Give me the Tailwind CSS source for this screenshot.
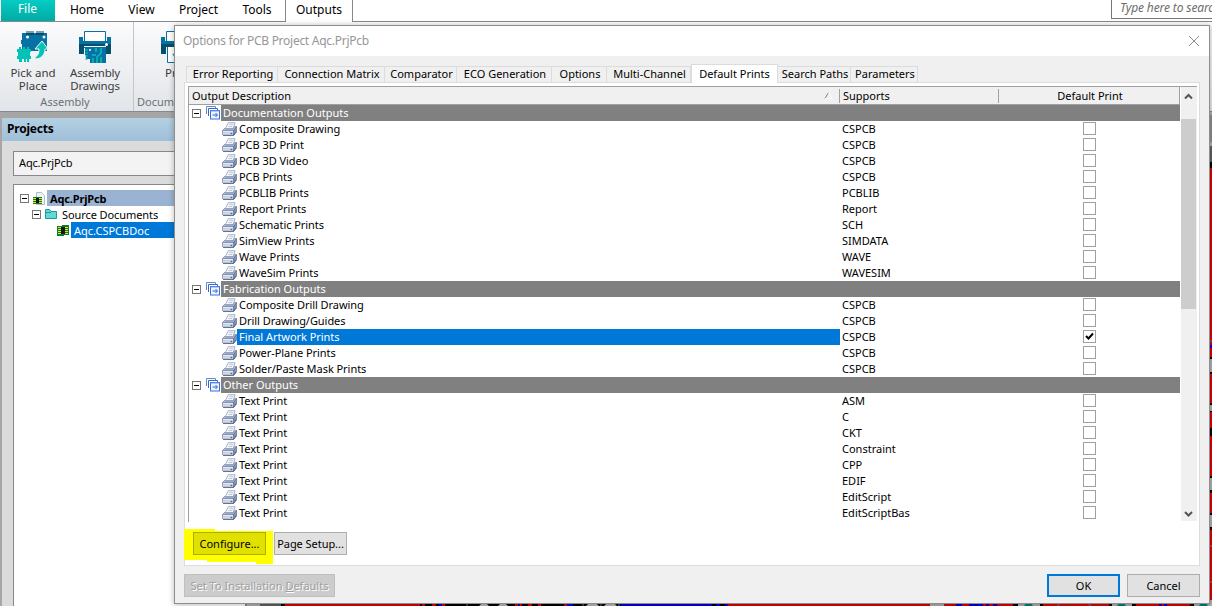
<!DOCTYPE html>
<html lang="en">
<head>
    <meta charset="UTF-8">
    <meta name="viewport" content="width=device-width, initial-scale=1.0">
    <title>Options for PCB Project</title>
    <script src="https://cdn.jsdelivr.net/npm/@tailwindcss/browser@4"></script>
</head>
<body class="relative w-[1212px] h-[606px] overflow-hidden bg-[#a6a6a6] font-['Noto_Sans','Open_Sans',sans-serif] text-[11px] leading-4 text-black whitespace-nowrap">

    <!-- Icons -->
    <svg class="hidden">
        <symbol id="printer" viewBox="0 0 16 16">
            <path d="M6.500 1.500h7l-2 6h-8z" fill="#f6f8fc" stroke="#8c9bbb" stroke-width=".8"/>
            <path d="M7.500 3.500h4M6.500 5.500h4" stroke="#a9b5cb" stroke-width=".8"/>
            <path d="M3 7L.8 9.500h11.400l2.800-4-1.700-.5-1.800 3H3.500z" fill="#b9c5dc" stroke="#6f80a4" stroke-width=".6"/>
            <path d="M.5 9.500h11.500v5H1.500l-1-1z" fill="#e6ebf4" stroke="#6b7ca0" stroke-width=".8"/>
            <path d="M12 9.500l3-4v5l-3 4z" fill="#7f91b6" stroke="#4b5f8a" stroke-width=".6"/>
            <path d="M1 12h11" stroke="#a3b0cb" stroke-width=".8"/>
            <path d="M1 14.500h11l3-3.500" stroke="#3d4f78" fill="none" stroke-width=".8"/>
            <path d="M9 12.500h1.500" stroke="#33425f"/>
        </symbol>
        <symbol id="stack" viewBox="0 0 15 14">
            <path d="M.5 8V.5h9V2" fill="none" stroke="#5b88dc"/>
            <path d="M2.500 10V2.500h9V4" fill="none" stroke="#3b66cc"/>
            <rect x="4.500" y="4.500" width="9" height="8.500" fill="#eef5ff" stroke="#3f6fd4"/>
            <path d="M4.500 5h9" stroke="#6fa3ee"/>
            <path d="M6.500 9h4.500M9.500 7l2 2-2 2" fill="none" stroke="#2560e0"/>
        </symbol>
        <symbol id="minus" viewBox="0 0 9 9">
            <rect x=".5" y=".5" width="8" height="8" fill="#fff" stroke="#777"/>
            <path d="M2 4.500h5" stroke="#000"/>
        </symbol>
        <symbol id="plotter" viewBox="0 0 32 32">
            <path d="M5.500 10V.5h21V10" fill="#fff" stroke="#0672a3"/>
            <path d="M0 6h4v4h24V6h4v8H0z" fill="#0672a3"/>
            <path d="M0 13h32v10h-5v-7H5v7H0z" fill="#074d6c"/>
        </symbol>
    </svg>

    <!-- Ribbon tabs -->
    <div class="flex h-[22px] items-stretch border-b border-[#85898f] bg-white text-[12px] leading-5">
        <div class="ml-px w-[54px] bg-linear-to-b from-[#05cdc5] to-[#02aaa3] pr-px text-center leading-[18px] text-white">File</div>
        <div class="w-[64px] text-center">Home</div>
        <div class="w-[45px] text-center">View</div>
        <div class="w-[69px] text-center">Project</div>
        <div class="w-[48px] text-center">Tools</div>
        <div class="ml-[4px] h-[22px] w-[68px] border-x border-[#85898f] bg-white text-center">Outputs</div>
        <div class="ml-auto h-[19px] w-[101px] overflow-hidden border-b border-l border-[#777] pl-[8px] leading-[15px] tracking-[-0.12px] text-[#6d6d6d] italic">Type here to search</div>
    </div>

    <!-- Ribbon -->
    <div class="flex h-[90px] border-b border-[#85898f] bg-linear-to-b from-[#fbfbfc] to-[#e2e5e9] text-[11.5px] leading-[13px] text-[#3c3c3c]">
        <div class="flex w-[134px] flex-col border-r border-[#c3c7cc]">
            <div class="flex h-[73px] pt-2 text-center">
                <div class="flex w-[66px] flex-col items-center">
                    <svg class="h-[34px] w-[32px]" viewBox="0 0 32 34">
                        <path d="M5 3h25v18H5V14h-1v-4h1z" fill="#0672a3"/>
                        <path d="M9 1v4h8V1M19 1v4h8V1" fill="#074d6c"/>
                        <path d="M10 1v2M12 1v2M14 1v2M16 1v2M20 1v2M22 1v2M24 1v2M26 1v2" stroke="#e9f1f5"/>
                        <circle cx="10.500" cy="7" r="1.500" fill="#fff"/>
                        <circle cx="27" cy="7" r="1.500" fill="#fff"/>
                        <path d="M0 19h2v-2h2v2h2v-2h2v2h2v-2h2v2h2v3h-1v4h1v3h-2v3h-2v-3H9v3H7v-3H5v3H2v-3H0v-3h1v-4H0z" fill="#04c2b8"/>
                        <path d="M25 11l6 8h-3c0 6-4 10-10 10v-2c3-1 4-4 4-8h-4z" fill="#04c2b8" stroke="#f5f6f7"/>
                    </svg>
                    <span class="mt-[2px]">Pick and<br>Place</span>
                </div>
                <div class="flex w-[58px] flex-col items-center">
                    <svg class="h-[34px] w-[32px]" viewBox="0 -1 32 34">
                        <use href="#plotter" width="32" height="32"/>
                        <circle cx="27.500" cy="13.500" r="1.500" fill="#fff"/>
                        <path d="M5 16h22v16H11v-4H7v-4H5z" fill="#0672a3"/>
                        <path d="M5 15.500h22M5.500 17v14" stroke="#f4f5f7"/>
                        <path d="M6 19h3M6 22h3M6 25h3M6 28h3" stroke="#04c2b8"/>
                        <path d="M14 32v-5M18 32v-6l4-4v-5M22 32v-6M17 21v-4M13 24h4" fill="none" stroke="#04c2b8" stroke-width="1.500"/>
                        <circle cx="11" cy="19" r="1" fill="#fff"/>
                    </svg>
                    <span class="mt-[2px] tracking-[-0.2px]">Assembly<br>Drawings</span>
                </div>
            </div>
            <div class="pr-[3px] text-center text-[#6c7076] text-[11px]">Assembly</div>
        </div>
        <div class="flex w-[90px] flex-col">
            <div class="h-[73px] pt-2 pl-[27px]">
                <svg class="h-[34px] w-[32px]" viewBox="0 -1 32 34">
                    <use href="#plotter" width="32" height="32"/>
                    <path d="M6.500 16v15.500h19V16" fill="#fff" stroke="#0672a3"/>
                    <path d="M12 23l4 4 6-8" fill="none" stroke="#04c2b8" stroke-width="2"/>
                </svg>
                <div class="mt-[2px] pl-[4px]">Print</div>
            </div>
            <div class="pl-[3px] text-[#6c7076] text-[11px]">Documentation</div>
        </div>
    </div>

    <!-- Projects panel -->
    <div class="mt-[6px] ml-[2px] h-[488px] w-[245px] border-r border-[#85898f] bg-[#dbdbdb]">
        <div class="h-[23px] bg-linear-to-b from-[#b4cfe2] to-[#9fc0d9] pl-[5px] text-[12px] leading-[22px] font-bold tracking-[-0.2px]">Projects</div>
        <div class="mt-[10px] ml-[11px] h-[25px] border border-[#85898f] bg-[#f3f3f3] pl-[5px] leading-[22px] tracking-[-0.15px]">Aqc.PrjPcb</div>
        <div class="mt-[8px] ml-[11px] h-[430px] border border-[#85898f] bg-white pt-[5px]">
            <div class="flex h-4 items-center">
                <svg class="ml-[6px] size-[9px]"><use href="#minus"/></svg>
                <svg class="ml-[4px] h-[13px] w-[12px]" viewBox="0 0 12 13">
                    <path d="M3.500.5h5l3 3v9h-8z" fill="#eff5f7" stroke="#a9bfc6"/>
                    <path d="M0 5h9v7H0z" fill="#087d2d"/><path d="M3 6h3v5H3z" fill="#111"/>
                    <path d="M0 6.500h3M0 8.500h3M0 10.500h3M6 6.500h3M6 8.500h3M6 10.500h3" stroke="#e9d934"/>
                </svg>
                <span class="ml-[2px] h-4 flex-1 bg-[#9ab3d2] pl-[3px] leading-[17px] font-bold tracking-[-0.15px]">Aqc.PrjPcb</span>
            </div>
            <div class="flex h-4 items-center">
                <svg class="ml-[18px] size-[9px]"><use href="#minus"/></svg>
                <svg class="ml-[4px] h-[10px] w-[12px]" viewBox="0 0 12 10">
                    <path d="M.5 9.500v-9h4l1.500 2h5.500v7z" fill="#62d9d5" stroke="#1b9c99"/><path d="M1 3.500h5" stroke="#1b9c99"/>
                </svg>
                <span class="mt-[2px] ml-[5px] leading-4 tracking-[-0.08px]">Source Documents</span>
            </div>
            <div class="flex h-4 items-center">
                <svg class="ml-[43px] h-[11px] w-[12px]" viewBox="0 0 12 11">
                    <path d="M0 1h5V0h7v10H7v1H0z" fill="#087d2d"/><path d="M4 2h4v7H4z" fill="#151515"/>
                    <path d="M1 2.500h3M1 4.500h3M1 6.500h3M1 8.500h3M8 2.500h3M8 4.500h3M8 6.500h3M8 8.500h3" stroke="#f0dd37"/>
                </svg>
                <span class="ml-[2px] h-4 flex-1 bg-[#0078d7] pl-[3px] leading-[17px] text-white">Aqc.CSPCBDoc</span>
            </div>
        </div>
    </div>

    <!-- Board canvas -->
    <svg class="absolute top-[112px] left-[247px] h-[494px] w-[965px]" viewBox="247 112 965 494">
        <path d="M247 112h965v494H247z" fill="#b0b0b0"/>
        <path d="M1209 115h3v27h-3z" fill="#8c8c8c"/>
        <path d="M260 146h952v460H260z" fill="#606060"/>
        <path d="M281 162h931v444H281z" fill="#000"/>
        <path d="M285 168h135v438H285zM728 600h285v6H728zM1043 600h66v6h-66zM1136 600h54v6h-54zM1208 168h4v189h-4zM1208 374h4v29h-4zM1208 412h4v16h-4zM1208 436h4v40h-4zM1208 493h4v20h-4zM1208 530h4v70h-4z" fill="#e00000"/>
        <path d="M422 600h3v6h-3zM432 600h4v6h-4zM442 600h3v6h-3zM515 600h7v6h-7zM528 600h4v6h-4zM538 600h3v6h-3zM564 600h4v6h-4z" fill="#e00000"/>
        <path d="M439 600h3v6h-3zM518 600h2v6h-2zM567 600h6v6h-6zM621 600h91v6h-91zM716 600h4v6h-4zM725 600h3v6h-3zM956 600h6v6h-6zM969 600h14v6h-14zM986 600h3v6h-3zM993 600h4v6h-4zM1159 600h3v6h-3zM1164 600h3v6h-3zM1208 345h4v3h-4z" fill="#0000e8"/>
        <path d="M1208 359h4v13h-4zM1208 405h4v6h-4zM1208 478h4v12h-4zM1208 515h4v12h-4zM1018 600h22v6h-22zM1112 600h20v6h-20zM1194 600h18v6h-18zM930 600h14v6h-14z" fill="#b0b0b0"/>
        <path d="M479 606l2-2h6l2 2zM498 606l2-2h6l2 2zM586 606l3-3h7l3 3zM604 606l3-3h7l3 3z" fill="#bbb"/>
        <path d="M1024 606l2-3h5l2 3zM1117 606l2-3h5l2 3zM1199 606l2-3h5l2 3z" fill="#008080"/>
        <path d="M583 603v3M601 603v3M619 603v3M467 603v3M1208 344l4-4M1210 545l2 2M1210 583l2-2M1057 606l4-3M1087 603l4 3" fill="none" stroke="#5582c5"/>
    </svg>

    <!-- Options dialog -->
    <div class="absolute top-[25px] left-[174px] flex h-[579px] w-[1036px] flex-col border border-[#8e8e8e] bg-[#f0f0f0] shadow-[0_1px_6px_rgba(0,0,0,0.28)]">
        <div class="flex h-[30px] shrink-0 items-center justify-between bg-white pr-[9px] pl-[8px] text-[12px] tracking-[-0.27px] text-[#979797]">
            <span>Options for PCB Project Aqc.PrjPcb</span>
            <svg class="size-[12px]" viewBox="0 0 12 12"><path d="M1 1l10 10M11 1L1 11" stroke="#8c8c8c"/></svg>
        </div>

        <div id="tabs" class="z-10 mt-[8px] ml-[11px] flex h-[18px] shrink-0 items-end"></div>

        <div class="ml-[9px] flex h-[484px] w-[1016px] shrink-0 flex-col border border-[#dcdcdc] bg-white pt-[3px] pl-[3px]">
            <div class="flex h-[436px] w-[1009px] shrink-0 border-t border-l border-[#a0a0a0]">
                <div class="w-[991px]">
                    <div class="flex h-[18px] items-center border-r border-b border-[#a0a0a0] bg-[#f0f0f0]">
                        <span class="w-[635px] pl-[3px]">Output Description</span>
                        <svg class="h-[7px] w-[9px]" viewBox="0 0 9 7"><path d="M1 6.500L4.500.5" stroke="#808080"/><path d="M4.500.5l3.500 6H1" fill="none" stroke="#fff"/></svg>
                        <span class="ml-[6px] h-[14px] w-[159px] border-l border-[#a0a0a0] pl-[3px] leading-[14px]">Supports</span>
                        <span class="h-[14px] flex-1 border-l border-[#a0a0a0] pl-[2px] text-center leading-[14px]">Default Print</span>
                    </div>
                    <div id="rows"></div>
                </div>
                <div class="ml-px flex h-[434px] w-[16px] flex-col bg-[#f0f0f0]">
                    <svg class="h-[32px] w-[15px]" viewBox="0 0 15 32"><path d="M4 11.500L7.500 8l3.500 3.500" fill="none" stroke="#555" stroke-width="2"/></svg>
                    <div class="h-[190px] w-[15px] bg-[#cdcdcd]"></div>
                    <svg class="mt-auto h-[17px] w-[15px]" viewBox="0 0 15 17"><path d="M4 8l3.500 3.500L11 8" fill="none" stroke="#555" stroke-width="2"/></svg>
                </div>
            </div>
            <div class="relative flex h-[40px] pt-[10px] pl-[5px]">
                <svg class="absolute top-[7px] left-[-4px] h-[35px] w-[90px]" viewBox="0 0 90 35"><path d="M0 0h31v2h58v33H72v-2H23v-2H0z" fill="#ff0"/></svg>
                <button class="relative h-[23px] w-[73px] border border-[#adad00] bg-[#e1e100] leading-[21px]">Configure...</button>
                <button class="ml-[8px] h-[23px] w-[73px] border border-[#adadad] bg-[#e1e1e1] leading-[21px] tracking-[-0.05px]">Page Setup...</button>
            </div>
        </div>

        <div class="mt-[8px] flex pr-[9px] pl-[9px]">
            <button class="h-[23px] w-[151px] border border-[#bfbfbf] bg-[#ccc] leading-[21px] text-[#a0a0a0] [text-shadow:1px_1px_0_#fff]">Set To Installation <u>D</u>efaults</button>
            <button class="ml-auto h-[23px] w-[73px] border-2 border-[#0078d7] bg-[#e1e1e1] leading-[20px]">OK</button>
            <button class="ml-[7px] h-[23px] w-[73px] border border-[#adadad] bg-[#e1e1e1] leading-[22px]">Cancel</button>
        </div>
    </div>

    <script>
        // Tab captions with their widths
        const tabs = [
            ['Error Reporting', 92], ['Connection Matrix', 107], ['Comparator', 72], ['ECO Generation', 95],
            ['Options', 55], ['Multi-Channel', 84], ['Default Prints', 87], ['Search Paths', 73], ['Parameters', 67]
        ];
        document.getElementById('tabs').innerHTML = tabs.map(([name, width], i) => {
            const state = name === 'Default Prints'
                ? 'h-[19px] -mb-px bg-white border-x leading-[17px]'
                : 'h-[16px] border-r pl-[2px] leading-[14px]';
            return `<div class="${state} ${i === 0 ? 'border-l' : ''} shrink-0 border-t border-[#dcdcdc] text-center" style="width:${width}px">${name}</div>`;
        }).join('');

        const groups = [
            ['Documentation Outputs', [
                ['Composite Drawing', 'CSPCB'], ['PCB 3D Print', 'CSPCB'], ['PCB 3D Video', 'CSPCB'],
                ['PCB Prints', 'CSPCB'], ['PCBLIB Prints', 'PCBLIB'], ['Report Prints', 'Report'],
                ['Schematic Prints', 'SCH'], ['SimView Prints', 'SIMDATA'], ['Wave Prints', 'WAVE'], ['WaveSim Prints', 'WAVESIM']
            ]],
            ['Fabrication Outputs', [
                ['Composite Drill Drawing', 'CSPCB'], ['Drill Drawing/Guides', 'CSPCB'], ['Final Artwork Prints', 'CSPCB', true],
                ['Power-Plane Prints', 'CSPCB'], ['Solder/Paste Mask Prints', 'CSPCB']
            ]],
            ['Other Outputs', [
                ['Text Print', 'ASM'], ['Text Print', 'C'], ['Text Print', 'CKT'], ['Text Print', 'Constraint'],
                ['Text Print', 'CPP'], ['Text Print', 'EDIF'], ['Text Print', 'EditScript'], ['Text Print', 'EditScriptBas']
            ]]
        ];

        let html = '';
        groups.forEach(([title, items]) => {
            html += `
                <div class="flex h-4 items-center">
                    <svg class="ml-[3px] size-[9px]"><use href="#minus"/></svg>
                    <svg class="ml-[5px] h-[14px] w-[15px]"><use href="#stack"/></svg>
                    <span class="h-4 flex-1 bg-[#808080] pl-[2px] text-white">${title}</span>
                </div>`;
            items.forEach(([name, supports, selected]) => {
                html += `
                <div class="flex h-4">
                    <svg class="ml-[33px] h-4 w-[15px]" viewBox="0 0 15.500 16"><use href="#printer" width="16" height="16"/></svg>
                    <span class="${selected ? 'bg-[#0078d7] text-white' : ''} w-[603px] pl-[2px] tracking-[-0.05px]">${name}</span>
                    <span class="w-[243px] pl-[2px]">${supports}</span>
                    <span class="mt-px flex size-[13px] border border-[#a0a0a0] bg-white">
                        ${selected ? '<svg class="size-[11px]" viewBox="0 0 11 11"><path d="M2 5l2.500 2.500L9 2.500" fill="none" stroke="#000" stroke-width="2"/></svg>' : ''}
                    </span>
                </div>`;
            });
        });
        document.getElementById('rows').innerHTML = html;
    </script>
</body>
</html>
